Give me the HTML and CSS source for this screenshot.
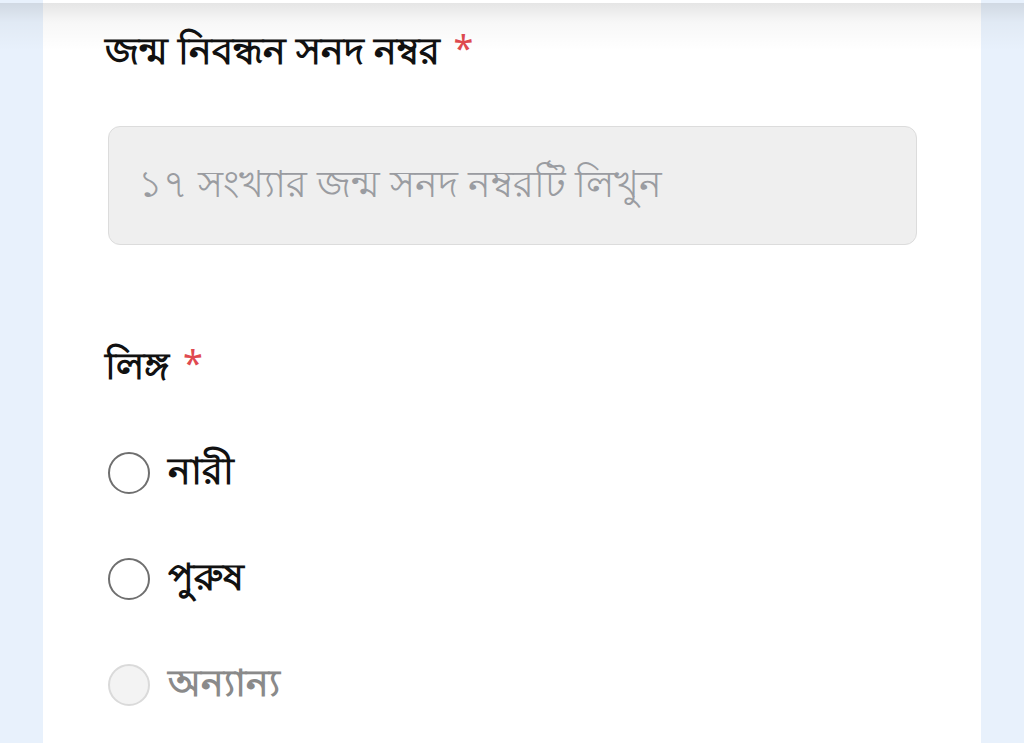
FILE: index.html
```html
<!DOCTYPE html>
<html lang="bn">
<head>
<meta charset="utf-8">
<link rel="stylesheet" href="styles.css">
</head>
<body>
<div class="page">
  <div class="topshade"></div>
  <main class="card">
    <section class="field">
      <h2 class="label">জন্ম নিবন্ধন সনদ নম্বর <span class="req">*</span></h2>
      <div class="input">১৭ সংখ্যার জন্ম সনদ নম্বরটি লিখুন</div>
    </section>
    <section class="field gender">
      <h2 class="label">লিঙ্গ <span class="req">*</span></h2>
      <div class="options">
        <div class="opt"><span class="radio"></span><span class="opt-text">নারী</span></div>
        <div class="opt"><span class="radio"></span><span class="opt-text">পুরুষ</span></div>
        <div class="opt disabled"><span class="radio"></span><span class="opt-text">অন্যান্য</span></div>
      </div>
    </section>
  </main>
</div>
</body>
</html>
```
FILE: styles.css
```css
html, body {
  margin: 0;
  padding: 0;
  height: 100%;
  overflow: hidden;
}
body {
  background: #e8f1fc;
  font-family: "Noto Sans", "DejaVu Sans", sans-serif;
}
.page {
  position: relative;
  height: 743px;
  display: flex;
  justify-content: flex-start;
}
.topshade {
  position: absolute;
  left: 0;
  right: 0;
  top: 3px;
  height: 48px;
  background: linear-gradient(to bottom, rgba(0,0,0,0.10), rgba(0,0,0,0.03) 40%, rgba(0,0,0,0));
  pointer-events: none;
}
.card {
  margin-left: 43px;
  width: 938px;
  background: #ffffff;
  padding: 24px 0 0 62px;
  box-sizing: border-box;
}
.label {
  margin: 0;
  font-size: 38px;
  font-weight: 700;
  color: #111;
  line-height: 48px;
}
.req {
  color: #e04a50;
  font-weight: 400;
  font-size: 36px;
  vertical-align: 3px;
  margin-left: 4px;
}
.input {
  margin-top: 53px;
  margin-left: 3px;
  width: 809px;
  height: 119px;
  box-sizing: border-box;
  border: 1px solid #dcdcdc;
  border-radius: 12px;
  background: #efefef;
  color: #9a9ca1;
  font-size: 38px;
  padding-left: 29px;
  display: flex;
  align-items: center;
}
.gender {
  margin-top: 94px;
}
.options {
  display: flex;
  flex-direction: column;
  gap: 64px;
  margin-top: 64px;
  margin-left: 3px;
}
.opt {
  display: flex;
  align-items: center;
  gap: 18px;
  height: 42px;
}
.radio {
  width: 42px;
  height: 42px;
  box-sizing: border-box;
  border: 2px solid #6f6f6f;
  border-radius: 50%;
  flex: none;
}
.opt-text {
  font-size: 38px;
  font-weight: 700;
  color: #111;
}
.disabled .radio {
  border-color: #dadada;
  background: #f3f3f3;
}
.disabled .opt-text {
  color: #8a8a8a;
}
```
